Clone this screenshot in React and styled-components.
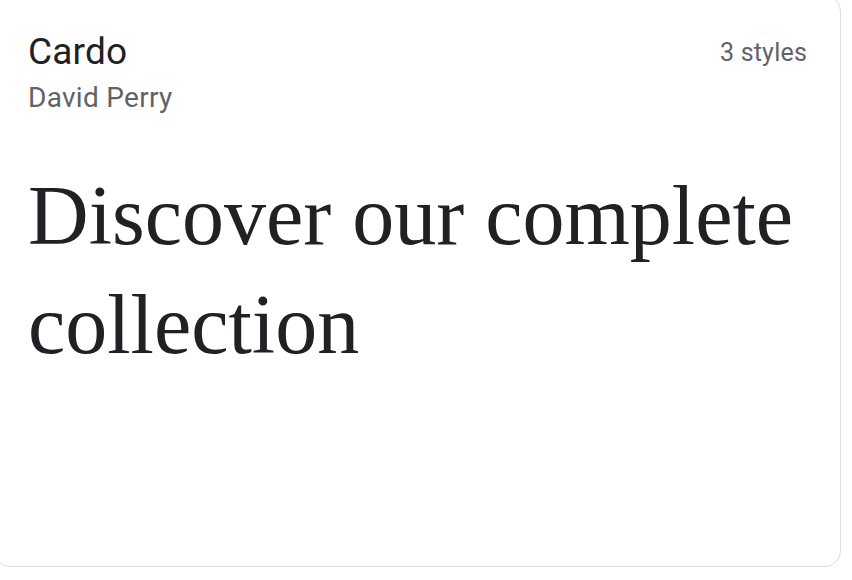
import styled, { createGlobalStyle } from "styled-components";

const GlobalStyle = createGlobalStyle`
  html, body {
    margin: 0;
    padding: 0;
    background: #ffffff;
  }
  body {
    font-family: Roboto, "Liberation Sans", sans-serif;
    overflow: hidden;
  }
`;

const Page = styled.div`
  width: 852px;
  height: 580px;
  overflow: hidden;
`;

// 폰트 카드 ----------------------------------------------------------
const Card = styled.div`
  box-sizing: border-box;
  width: 847px;
  height: 572px;
  margin: -5px 0 0 -6px;
  padding: 0 33px 0 33px;
  background: #ffffff;
  border: 1px solid #dadce0;
  border-radius: 16px;
  display: flex;
  flex-direction: column;
`;

const Header = styled.div`
  display: flex;
  justify-content: space-between;
  align-items: flex-start;
  padding-top: 34px;
`;

const Names = styled.div`
  display: flex;
  flex-direction: column;
`;

const FamilyName = styled.div`
  font-size: 37px;
  line-height: 44px;
  letter-spacing: 0.2px;
  color: #202124;
`;

const Designer = styled.div`
  font-size: 28px;
  line-height: 32px;
  margin-top: 8px;
  letter-spacing: 0.3px;
  color: #5f6368;
`;

const StyleCount = styled.div`
  font-size: 25px;
  line-height: 30px;
  margin-top: 8px;
  letter-spacing: 0.2px;
  color: #5f6368;
`;

const Sample = styled.p`
  margin: 47px 0 0;
  font-family: "Liberation Serif", "Times New Roman", serif;
  font-size: 84px;
  line-height: 109px;
  color: #202124;
`;

export default function App() {
  return (
    <Page>
      <GlobalStyle />
      <Card>
        <Header>
          <Names>
            <FamilyName>Cardo</FamilyName>
            <Designer>David Perry</Designer>
          </Names>
          <StyleCount>3 styles</StyleCount>
        </Header>
        <Sample>Discover our complete collection</Sample>
      </Card>
    </Page>
  );
}
